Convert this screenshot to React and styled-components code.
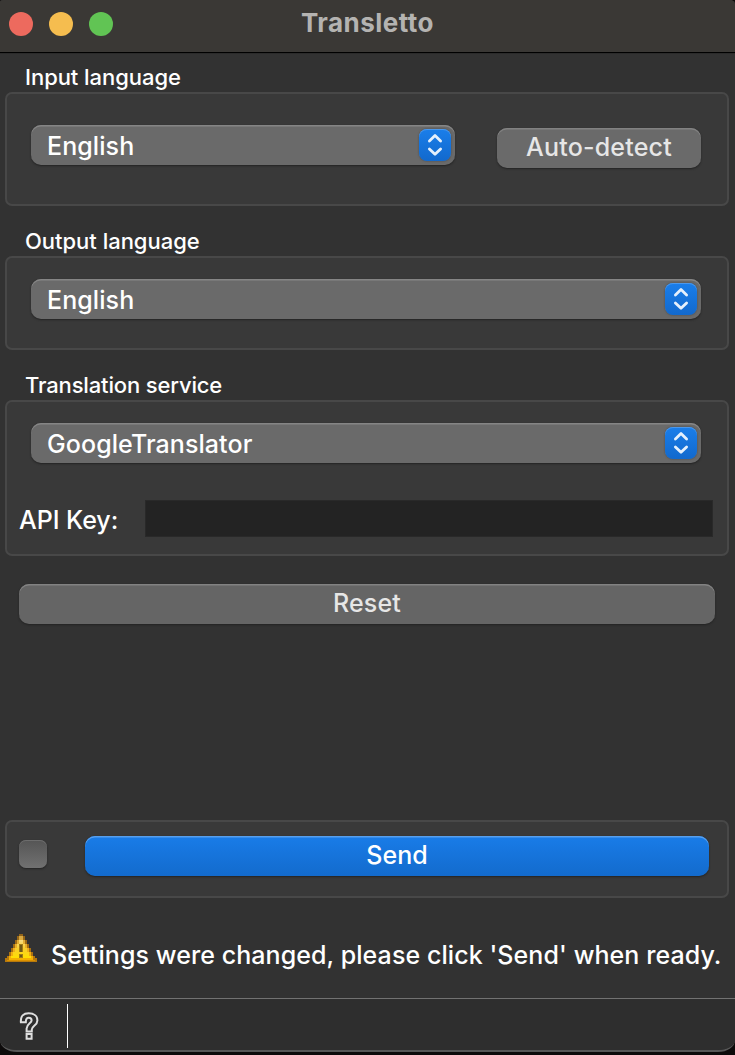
import React from "react";
import styled, { createGlobalStyle } from "styled-components";

const GlobalStyle = createGlobalStyle`
  * { box-sizing: border-box; }
  body { margin: 0; background: #0d0b0b; overflow: hidden; }
  button { font: inherit; border: 0; padding: 0; margin: 0; }
`;

const Window = styled.main`
  width: 735px;
  height: 1052px;
  display: flex;
  flex-direction: column;
  overflow: hidden;
  background: #323232;
  color: #fff;
  font-family: Inter, "Liberation Sans", sans-serif;
  font-size: 25px;
  font-weight: 500;
  line-height: 30px;
  border-radius: 3px 5px 17px 17px / 2px 4px 12px 12px;
  border-bottom: 2px solid #575757;
`;

const TitleBar = styled.header`
  height: 53px;
  flex: none;
  display: flex;
  background: #3a3835;
  border-bottom: 1px solid #000;
`;

const Lights = styled.div`
  width: 301px;
  display: flex;
  gap: 16px;
  padding: 12px 0 0 9px;
`;

const Light = styled.span`
  width: 24px;
  height: 24px;
  border-radius: 50%;
  background: ${(p) => p.$color};
`;

const Title = styled.h1`
  margin: 8px 0 0 0;
  font-size: 26px;
  line-height: 30px;
  font-weight: 700;
  letter-spacing: 0.46px;
  color: #b4b3b1;
`;

const Body = styled.div`
  flex: 1;
  display: flex;
  flex-direction: column;
  padding: 0 6px 0 5px;
  border-top: 1px solid #2b2b2b;
`;

const Section = styled.section`
  display: flex;
  flex-direction: column;
  margin-top: ${(p) => p.$top}px;
`;

const SectionLabel = styled.h2`
  margin: 0 0 0 20px;
  height: 30px;
  font-size: 22px;
  line-height: 30px;
  font-weight: 500;
  letter-spacing: ${(p) => p.$spacing || 0}px;
`;

const Group = styled.div`
  height: ${(p) => p.$height}px;
  padding: ${(p) => p.$pad};
  border: 2px solid #484848;
  border-radius: 7px;
  background: #393939;
`;

const Row = styled.div`
  display: flex;
  align-items: flex-start;
  gap: ${(p) => p.$gap || 0}px;
`;

const Select = styled.button`
  width: ${(p) => p.$width}px;
  height: 40px;
  display: flex;
  align-items: flex-start;
  justify-content: space-between;
  padding: 4px 4px 0 16px;
  border-radius: 10px;
  background: #6a6a6a;
  color: #fff;
  letter-spacing: 0.08px;
  box-shadow: inset 0 1.5px 0 #858585, 0 1px 2px #222;
`;

const SelectValue = styled.span`
  margin-top: 2px;
`;

const Stepper = styled.span`
  width: 32px;
  height: 32px;
  display: grid;
  place-items: center;
  border-radius: 8px;
  background: linear-gradient(#1a7eea, #1269cd);
  box-shadow: inset 0 1px 0 #4b98ec, 0 0 2px #444;
`;

const PushButton = styled.button`
  width: ${(p) => p.$width}px;
  height: 40px;
  display: flex;
  align-items: center;
  justify-content: center;
  padding-bottom: 2px;
  margin-top: ${(p) => p.$top || 0}px;
  margin-left: ${(p) => p.$left || 0}px;
  border-radius: 10px;
  background: ${(p) => (p.$primary ? "linear-gradient(#197ce8, #136bcd)" : p.$dim ? "#656565" : "#6a6a6a")};
  color: ${(p) => (p.$primary ? "#fff" : "#e6e6e6")};
  letter-spacing: ${(p) => p.$spacing || 0}px;
  box-shadow: inset 0 1.5px 0 ${(p) => (p.$primary ? "#579fed" : "#828282")}, 0 1px 2px #222;
`;

const PickerInset = styled.div`
  padding-left: 12px;
`;

const KeyRow = styled.div`
  display: flex;
  margin-top: 37px;
`;

const KeyLabel = styled.label`
  width: 126px;
  flex: none;
  padding-top: 5px;
  letter-spacing: -0.05px;
`;

const KeyInput = styled.input`
  width: 568px;
  flex: none;
  height: 37px;
  border: 1px solid #292929;
  outline: 0;
  background: #232323;
  color: #fff;
`;

const SendArea = styled.div`
  margin-top: 196px;
`;

const Check = styled.span`
  width: 28px;
  height: 28px;
  margin-top: 4px;
  border-radius: 7px;
  background: linear-gradient(#555, #717171);
  box-shadow: inset 0 1px 0 #6d6d6d, 0 1px 2px #222;
`;

const Message = styled.div`
  display: flex;
  margin-top: 36px;
  white-space: nowrap;
`;

const MessageText = styled.p`
  margin: 6px 0 0 14px;
  letter-spacing: 0.075px;
`;

const StatusBar = styled.footer`
  height: 52px;
  flex: none;
  display: flex;
  padding: 5px 0 0 18px;
  border-top: 1px solid #727272;
  background: #2e2e2e;
`;

const HelpBox = styled.span`
  width: 21px;
  padding-top: 5px;
`;

const Divider = styled.span`
  width: 1px;
  height: 44px;
  margin-left: 28px;
  background: #fff;
`;

const Chevrons = () => (
  <svg width="18" height="24" viewBox="0 0 18 24" fill="none" stroke="#e5f0fc" strokeWidth="2.8" strokeLinecap="round" strokeLinejoin="round">
    <path d="M3.4 8 9 2.6 14.6 8M3.4 15.9 9 21.3l5.6-5.4" />
  </svg>
);

const WarningIcon = () => (
  <svg width="32" height="30" viewBox="0 0 32 30" shapeRendering="crispEdges">
    <defs>
      <linearGradient id="edge" x1="0" y1="0" x2="0" y2="1">
        <stop offset="0" stopColor="#8f6219" />
        <stop offset=".6" stopColor="#a97012" />
        <stop offset="1" stopColor="#b97a0c" />
      </linearGradient>
      <linearGradient id="amber" x1="0" y1="0" x2="0" y2="1">
        <stop offset="0" stopColor="#d6a846" />
        <stop offset=".5" stopColor="#eeb020" />
        <stop offset="1" stopColor="#f5b000" />
      </linearGradient>
      <linearGradient id="yellow" x1="0" y1="0" x2="0" y2="1">
        <stop offset="0" stopColor="#f8dc80" />
        <stop offset=".5" stopColor="#f8ce2b" />
        <stop offset="1" stopColor="#ffe000" />
      </linearGradient>
    </defs>
    <path fill="url(#edge)" d="M14 0h4v2h2v4h2v4h2v4h2v4h2v4h2v2h2v4H0v-4h2v-2h2v-4h2v-4h2v-4h2V6h2V2h2z" />
    <path fill="url(#amber)" d="M14 2h4v4h2v4h2v4h2v4h2v4h2v4H4v-4h2v-4h2v-4h2v-4h2V6h2z" />
    <path fill="url(#yellow)" d="M14 6h4v4h2v4h2v4h2v4h2v2H6v-2h2v-4h2v-4h2v-4h2z" />
    <path fill="#a07b18" d="M14 10h4v8h-4zM14 20h4v4h-4z" />
    <path fill="#6d5818" d="M15 11h2v7h-2zM15 21h2v2h-2z" />
    <path fill="#dc9200" d="M2 26h28v1H2z" />
  </svg>
);

const HelpIcon = () => (
  <svg width="22" height="32" viewBox="0 0 22 32" fill="none" stroke="#dedede" strokeWidth="2">
    <path d="M2.9 13.2C2.4 7 5.5 4.3 10.7 4.3c5.3 0 8.7 2.8 8.7 7.1 0 5-5.6 5.5-5.6 9.1v2H8.6v-3c0-4.7 5-5.5 5-8.1 0-1.7-1.1-2.6-2.8-2.6-2 0-3 1.2-3 4.4z" />
    <path d="M8.6 25h5v4.7h-5z" />
  </svg>
);

const Picker = ({ value, width }) => (
  <Select $width={width}>
    <SelectValue>{value}</SelectValue>
    <Stepper><Chevrons /></Stepper>
  </Select>
);

export default function App() {
  return (
    <>
      <GlobalStyle />
      <Window>
        <TitleBar>
          <Lights>
            <Light $color="#ed6a5e" />
            <Light $color="#f5bd4f" />
            <Light $color="#61c454" />
          </Lights>
          <Title>Transletto</Title>
        </TitleBar>
        <Body>
          <Section $top={8}>
            <SectionLabel $spacing={-0.05}>Input language</SectionLabel>
            <Group $height={114} $pad="31px 24px 0">
              <Row $gap={42}>
                <Picker value="English" width={424} />
                <PushButton $width={204} $top={3} $spacing={0.2}>Auto-detect</PushButton>
              </Row>
            </Group>
          </Section>
          <Section $top={20}>
            <SectionLabel $spacing={-0.02}>Output language</SectionLabel>
            <Group $height={94} $pad="21px 24px 0">
              <Picker value="English" width={670} />
            </Group>
          </Section>
          <Section $top={20}>
            <SectionLabel $spacing={-0.15}>Translation service</SectionLabel>
            <Group $height={156} $pad="21px 12px 0">
              <PickerInset>
                <Picker value="GoogleTranslator" width={670} />
              </PickerInset>
              <KeyRow>
                <KeyLabel htmlFor="key">API Key:</KeyLabel>
                <KeyInput id="key" />
              </KeyRow>
            </Group>
          </Section>
          <PushButton $dim $width={696} $top={28} $left={14} $spacing={0.15}>Reset</PushButton>
          <SendArea>
            <Group $height={78} $pad="14px 12px 0">
              <Row $gap={38}>
                <Check />
                <PushButton $primary $width={624}>Send</PushButton>
              </Row>
            </Group>
          </SendArea>
          <Message>
            <WarningIcon />
            <MessageText>Settings were changed, please click 'Send' when ready.</MessageText>
          </Message>
        </Body>
        <StatusBar>
          <HelpBox><HelpIcon /></HelpBox>
          <Divider />
        </StatusBar>
      </Window>
    </>
  );
}
